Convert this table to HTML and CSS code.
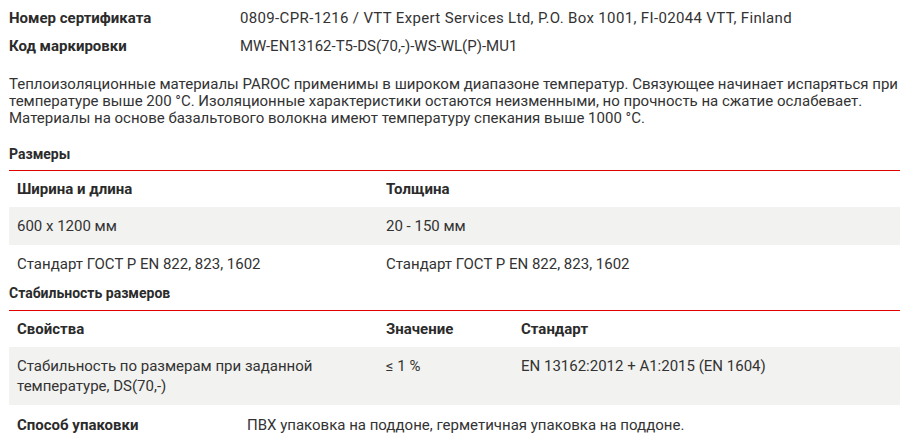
FILE: index.html
```html
<!DOCTYPE html>
<html lang="ru">
<head>
<meta charset="utf-8">
<link rel="stylesheet" href="styles.css">
</head>
<body>
<div class="page">
  <div class="spec">
    <div class="spec-label">Номер сертификата</div>
    <div class="spec-value spec-value-wide">0809-CPR-1216 / VTT Expert Services Ltd, P.O. Box 1001, FI-02044 VTT, Finland</div>
  </div>
  <div class="spec">
    <div class="spec-label">Код маркировки</div>
    <div class="spec-value">MW-EN13162-T5-DS(70,-)-WS-WL(P)-MU1</div>
  </div>

  <p class="desc">Теплоизоляционные материалы PAROC применимы в широком диапазоне температур. Связующее начинает испаряться при температуре выше 200 °C. Изоляционные характеристики остаются неизменными, но прочность на сжатие ослабевает. Материалы на основе базальтового волокна имеют температуру спекания выше 1000 °C.</p>

  <h3 class="section-title">Размеры</h3>
  <div class="table table-2">
    <div class="row head">
      <div class="cell">Ширина и длина</div>
      <div class="cell">Толщина</div>
    </div>
    <div class="row alt">
      <div class="cell">600 x 1200 мм</div>
      <div class="cell">20 - 150 мм</div>
    </div>
    <div class="row">
      <div class="cell">Стандарт ГОСТ Р EN 822, 823, 1602</div>
      <div class="cell">Стандарт ГОСТ Р EN 822, 823, 1602</div>
    </div>
  </div>

  <h3 class="section-title second">Стабильность размеров</h3>
  <div class="table table-3">
    <div class="row head">
      <div class="cell">Свойства</div>
      <div class="cell">Значение</div>
      <div class="cell">Стандарт</div>
    </div>
    <div class="row alt">
      <div class="cell">Стабильность по размерам при заданной температуре, DS(70,-)</div>
      <div class="cell">≤ 1 %</div>
      <div class="cell">EN 13162:2012 + A1:2015 (EN 1604)</div>
    </div>
  </div>

  <div class="spec pack">
    <div class="spec-label">Способ упаковки</div>
    <div class="spec-value">ПВХ упаковка на поддоне, герметичная упаковка на поддоне.</div>
  </div>
</div>
</body>
</html>
```

FILE: styles.css
```css
* { box-sizing: border-box; }
html, body { margin: 0; padding: 0; background: #fff; }
body {
  font-family: Roboto, "Noto Sans", "Liberation Sans", sans-serif;
  font-size: 15px;
  color: #333;
}
.page {
  width: 909px;
  padding: 4px 9px 0 9px;
}
.spec {
  display: grid;
  grid-template-columns: 231px 1fr;
  line-height: 20px;
  padding: 4px 0;
}
.spec-label {
  font-weight: 700;
  color: #2b2b2b;
}
.spec-value-wide {
  letter-spacing: 0.35px;
}
.desc {
  margin: 16px 0 0;
  line-height: 17px;
}
.section-title {
  margin: 17px 0 0;
  font-size: 14px;
  font-weight: 700;
  line-height: 20px;
  color: #2b2b2b;
  padding-bottom: 6px;
}
.section-title.second {
  margin-top: 0;
  padding-bottom: 7px;
}
.table {
  width: 891px;
  border-top: 1px solid #e00000;
}
.row {
  display: grid;
  line-height: 20px;
}
.table-2 .row { grid-template-columns: 369px 1fr; }
.table-3 .row { grid-template-columns: 369px 135px 1fr; }
.row .cell {
  padding: 9px 8px;
}
.row.head .cell {
  padding: 8px 8px;
  font-weight: 700;
  color: #2b2b2b;
}
.row.alt { background: #f2f2f0; }
.table-3 .row.alt .cell:first-child { padding-right: 40px; }
.spec.pack {
  grid-template-columns: 230px 1fr;
  padding: 10px 8px;
}
```
